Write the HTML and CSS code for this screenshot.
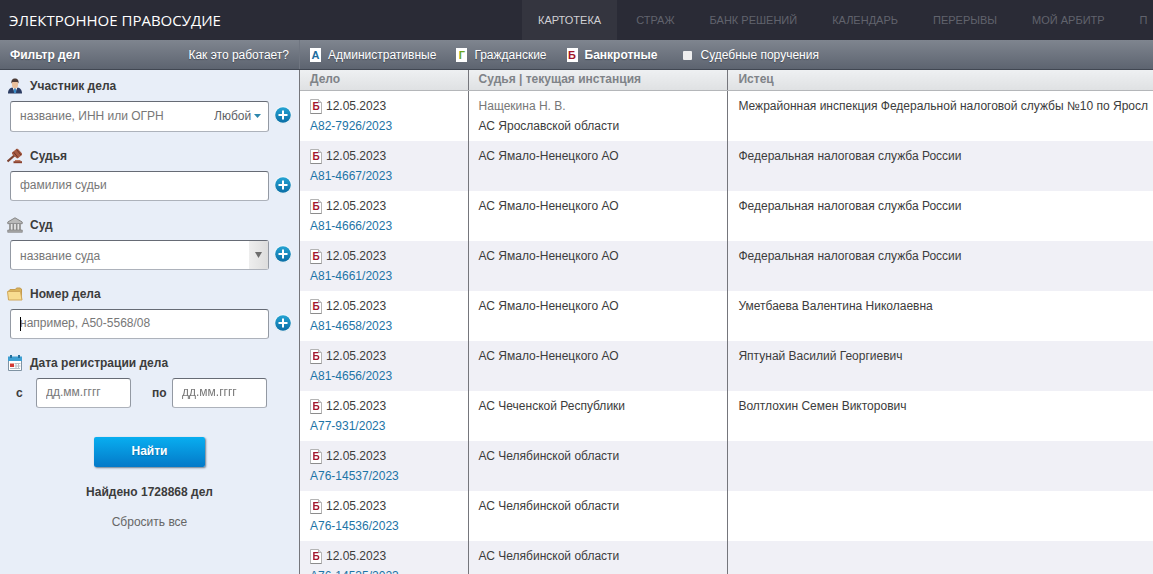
FILE: index.html
```html
<!DOCTYPE html>
<html lang="ru">
<head>
  <meta charset="UTF-8">
  <meta name="viewport" content="width=device-width, initial-scale=1.0">
  <title>Электронное правосудие</title>
  <link rel="stylesheet" href="styles.css">
</head>
<body>
  <!-- Icons used more than once -->
  <svg class="sprite" aria-hidden="true">
    <symbol id="doc" viewBox="0 0 12 16">
      <path d="M.5 1.5h8l3 3v11H.5z" fill="#fff" stroke="#b4b4b4"/>
      <path d="M8.5 1.5v3h3" fill="#ddd" stroke="#b4b4b4"/>
      <path d="M.5 15.5h11" stroke="#8c8c8c"/>
    </symbol>
    <symbol id="plus" viewBox="0 0 18 18">
      <circle cx="9" cy="9.500" r="8.500" fill="#b9cfdd"/>
      <circle cx="9" cy="9" r="8.700" fill="#f6fafd"/>
      <circle cx="9" cy="9" r="7.800" fill="url(#blue)"/>
      <path d="M9 4.500v9M4.500 9h9" stroke="#fff" stroke-width="2"/>
    </symbol>
    <linearGradient id="blue" x1="0" y1="0" x2="0" y2="1">
      <stop offset="0" stop-color="#25a3d3"/>
      <stop offset="1" stop-color="#0b6ea6"/>
    </linearGradient>
  </svg>

  <header class="header">
    <a class="logo" href="#">ЭЛЕКТРОННОЕ ПРАВОСУДИЕ</a>
    <nav class="nav">
      <a class="nav-link active" href="#">КАРТОТЕКА</a>
      <a class="nav-link" href="#">СТРАЖ</a>
      <a class="nav-link" href="#">БАНК РЕШЕНИЙ</a>
      <a class="nav-link" href="#">КАЛЕНДАРЬ</a>
      <a class="nav-link" href="#">ПЕРЕРЫВЫ</a>
      <a class="nav-link" href="#">МОЙ АРБИТР</a>
      <a class="nav-link" href="#">П</a>
    </nav>
  </header>

  <div class="toolbar">
    <div class="toolbar-left">
      <b>Фильтр дел</b>
      <a href="#">Как это работает?</a>
    </div>
    <div class="types">
      <button type="button" class="type"><span class="letter blue">А</span>Административные</button>
      <button type="button" class="type"><span class="letter green">Г</span>Гражданские</button>
      <button type="button" class="type selected"><span class="letter red">Б</span>Банкротные</button>
      <label class="orders"><input type="checkbox" class="check">Судебные поручения</label>
    </div>
  </div>

  <div class="main">
    <form class="sidebar">
      <div class="group">
        <label class="title" for="party">
          <svg class="icon" viewBox="0 0 16 16"><path d="M1 15.500c0-4 2-5.500 4.500-6h5c2.500.5 4.500 2 4.500 6z" fill="#2c3c62"/><path d="M5.500 9h5L8 15.500z" fill="#fff"/><path d="M7.300 10h1.400l.6 4L8 15.500 6.700 14z" fill="#3a8cc8"/><path d="M5 3.500h6V7c0 2-1.400 3.500-3 3.500S5 9 5 7z" fill="#eac09c"/><path d="M4.500 5.500C4 2 5.500.5 8 .5s4 1.500 3.500 5L10.500 4h-5z" fill="#4b3a36"/></svg>
          Участник дела
        </label>
        <div class="line">
          <div class="box tall">
            <input type="text" id="party" class="input" placeholder="название, ИНН или ОГРН">
            <select class="role" aria-label="Роль участника"><option>Любой</option></select>
            <svg class="caret" viewBox="0 0 7 4"><path d="M0 0h7L3.500 4z" fill="#2d87ad"/></svg>
          </div>
          <button type="button" class="add" aria-label="Добавить участника"><svg><use href="#plus"/></svg></button>
        </div>
      </div>

      <div class="group">
        <label class="title" for="judge">
          <svg class="icon" viewBox="0 0 16 16"><path d="M.5 13.500 8.500 6.500" stroke="#7d4331" stroke-width="2.200"/><path d="m5 4.500 5-4 1.500 1 3.500 4v1.500l-4.500 3.500-1-.5L5 6z" fill="#a65b43"/><path d="m6.500 4 4.500 5.500M9.500 1.500 14 7" stroke="#6e3526"/><path d="M8 12h5.500v1.500H8z" fill="#c07a5f"/><path d="M6.500 13.200h8.500v2H6.500z" fill="#8c432f"/></svg>
          Судья
        </label>
        <div class="line">
          <div class="box"><input type="text" id="judge" class="input" placeholder="фамилия судьи"></div>
          <button type="button" class="add" aria-label="Добавить судью"><svg><use href="#plus"/></svg></button>
        </div>
      </div>

      <div class="group">
        <label class="title" for="court">
          <svg class="icon" viewBox="0 0 16 16"><path d="M8 .8.8 5v1.700h14.400V5z" fill="#b9b9b9" stroke="#858585"/><path d="M2 7h12v6H2z" fill="#e4e4e4"/><path d="M3 7v6M6.300 7v6M9.700 7v6M13 7v6" stroke="#8b8b8b" stroke-width="1.600"/><path d="M.7 13h14.600v2.300H.7z" fill="#a8a8a8" stroke="#777" stroke-width=".6"/></svg>
          Суд
        </label>
        <div class="line">
          <div class="box">
            <select id="court" class="input"><option>название суда</option></select>
            <span class="drop"><svg viewBox="0 0 7 6"><path d="M0 0h7L3.500 6z" fill="#6d6d6d"/></svg></span>
          </div>
          <button type="button" class="add" aria-label="Добавить суд"><svg><use href="#plus"/></svg></button>
        </div>
      </div>

      <div class="group">
        <label class="title" for="number">
          <svg class="icon" viewBox="0 0 16 16"><path d="M2 13.500v-9l1-1h5.500l1-1.500H13l1.500 1v10z" fill="#d8b25c" stroke="#c39a4e"/><path d="M.5 5.500h13l1.500 8.500H1.500z" fill="#f8dc90" stroke="#cfa65a"/></svg>
          Номер дела
        </label>
        <div class="line">
          <div class="box editing"><input type="text" id="number" class="input" placeholder="например, А50-5568/08" autofocus></div>
          <button type="button" class="add" aria-label="Добавить номер"><svg><use href="#plus"/></svg></button>
        </div>
      </div>

      <div class="group">
        <label class="title" for="from">
          <svg class="icon" viewBox="0 0 16 16"><path d="M1.500 2.500h13v13h-13z" fill="#fff" stroke="#7f93a3"/><path d="M1 1.500h14V6H1z" fill="#3d9fd2"/><path d="M4 0v3M12 0v3" stroke="#246f9c" stroke-width="2"/><path d="M7.500 8.500h6M7.500 11h6M3 13.500h10M9 8v6M11.500 8v6" stroke="#b9c0c6"/><path d="M3 8.500h4V12H3z" fill="#d33a34"/></svg>
          Дата регистрации дела
        </label>
        <div class="dates">
          <label for="from">с</label>
          <div class="box"><input type="text" id="from" class="input" placeholder="дд.мм.гггг"></div>
          <label for="to">по</label>
          <div class="box"><input type="text" id="to" class="input" placeholder="дд.мм.гггг"></div>
        </div>
      </div>

      <div class="actions">
        <button type="submit" class="submit">Найти</button>
        <b>Найдено 1728868 дел</b>
        <button type="reset" class="reset">Сбросить все</button>
      </div>
    </form>

    <table class="cases">
      <thead>
        <tr>
          <th class="col-case">Дело</th>
          <th class="col-judge">Судья | текущая инстанция</th>
          <th>Истец</th>
        </tr>
      </thead>
      <tbody id="rows"></tbody>
    </table>
  </div>

  <script src="script.js"></script>
</body>
</html>
```
FILE: styles.css
```css
* {
  box-sizing: border-box;
}

body {
  margin: 0;
  height: 100vh;
  display: flex;
  flex-direction: column;
  overflow: hidden;
  font: 12px/20px "Liberation Sans", Arial, sans-serif;
  color: #3c3c3c;
  background: #fff;
}

a {
  color: inherit;
  text-decoration: none;
}

input,
select,
button {
  font: inherit;
  color: inherit;
  margin: 0;
  padding: 0;
  border: none;
  background: none;
  outline: none;
}

button {
  cursor: pointer;
}

.sprite {
  position: absolute;
  width: 0;
  height: 0;
}

/* Header */
.header {
  display: flex;
  flex: none;
  height: 40px;
  line-height: 40px;
  background: #2a2b36;
}

.logo {
  flex: none;
  width: 522px;
  padding-left: 9px;
  font-family: "Open Sans", sans-serif;
  font-size: 15px;
  color: #fff;
}

.nav {
  display: flex;
  gap: 3px;
  flex: 1;
  min-width: 0;
  overflow: hidden;
  font-size: 11px;
  white-space: nowrap;
}

.nav-link {
  padding: 0 16px;
  color: #61636d;
}

.nav-link.active {
  color: #d0d0d4;
  background: #34353f;
}

/* Toolbar */
.toolbar {
  display: flex;
  flex: none;
  height: 30px;
  line-height: 30px;
  color: #fff;
  text-shadow: 0 1px 1px #444a55;
  background: linear-gradient(#7f858f, #5d6470);
  border-bottom: 1px solid #414752;
}

.toolbar-left {
  display: flex;
  justify-content: space-between;
  flex: none;
  width: 300px;
  padding: 0 10px;
  border-right: 1px solid #707681;
}

.types {
  display: flex;
  gap: 20px;
  padding-left: 10px;
}

.type,
.orders {
  display: flex;
  align-items: center;
  gap: 7px;
  height: 30px;
  text-shadow: inherit;
}

.type.selected {
  font-weight: bold;
}

.letter {
  width: 11px;
  height: 14px;
  line-height: 15px;
  font-size: 11px;
  font-weight: bold;
  text-align: center;
  text-shadow: none;
  background: #fff;
}

.blue {
  color: #1e6c9e;
}

.green {
  color: #6ba51e;
}

.red {
  color: #a3162c;
}

.orders {
  gap: 8px;
  padding-left: 6px;
}

.check {
  appearance: none;
  width: 9px;
  height: 9px;
  border-radius: 1px;
  background: #eee;
}

/* Filter */
.main {
  display: flex;
  flex: 1;
  min-height: 0;
}

.sidebar {
  flex: none;
  width: 300px;
  padding: 6px 7px 0 10px;
  background: #e8eef8;
  border-right: 1px solid #75767c;
}

.group {
  margin-bottom: 14px;
}

.title {
  display: flex;
  align-items: center;
  gap: 7px;
  margin: 0 0 5px -3px;
  font-weight: bold;
}

.icon {
  width: 16px;
  height: 16px;
}

.line {
  display: flex;
  align-items: flex-start;
  gap: 5px;
}

.box {
  position: relative;
  display: flex;
  flex: 1;
  min-width: 0;
  height: 30px;
  background: #fff;
  border: 1px solid #9399a3;
  border-top-color: #666b75;
  border-bottom-color: #adb2bb;
  border-radius: 3px;
}

.box.tall {
  height: 31px;
}

.input {
  flex: 1;
  min-width: 0;
  width: 100%;
  padding: 0 9px 2px;
  appearance: none;
}

.input::placeholder,
select.input {
  color: #777;
}

select.input {
  padding: 2px 9px 0;
}

/* Text cursor of the active field */
.editing .input {
  caret-color: transparent;
}

.editing::before {
  content: "";
  position: absolute;
  left: 9px;
  top: 7px;
  width: 1px;
  height: 14px;
  background: #000;
}

.role {
  width: 54px;
  padding-bottom: 2px;
  appearance: none;
  color: #5d6166;
}

.caret {
  position: absolute;
  right: 7px;
  top: 12px;
  width: 7px;
  height: 4px;
  pointer-events: none;
}

.drop {
  display: flex;
  align-items: center;
  justify-content: center;
  flex: none;
  width: 19px;
  background: linear-gradient(90deg, #eee, #ddd);
}

.drop svg {
  width: 7px;
  height: 6px;
}

.add,
.add svg {
  display: block;
  width: 18px;
  height: 18px;
}

.add {
  margin-top: 5px;
}

.dates {
  display: flex;
  align-items: center;
  padding-right: 25px;
  font-weight: bold;
}

.dates label {
  width: 26px;
  padding-left: 6px;
}

.dates .box {
  font-weight: normal;
}

.dates .box + label {
  width: 41px;
  padding-left: 21px;
}

.actions {
  display: flex;
  flex-direction: column;
  align-items: center;
  gap: 10px;
  padding: 15px 3px 0 0;
}

.submit {
  width: 111px;
  height: 30px;
  margin-bottom: 5px;
  padding-bottom: 2px;
  font-weight: bold;
  color: #fff;
  text-shadow: 0 1px 1px #066fa9;
  background: linear-gradient(#08aef0, #0479c8);
  border-radius: 2px;
  box-shadow: 1px 1px 2px #6c7d8e;
}

.reset {
  color: #666;
}

/* Cases */
.cases {
  flex: 1;
  align-self: flex-start;
  min-width: 0;
  table-layout: fixed;
  border-collapse: collapse;
  white-space: nowrap;
}

.cases th,
.cases td {
  overflow: hidden;
  padding: 5px 5px 5px 10px;
  text-align: left;
  vertical-align: top;
}

.cases th + th,
.cases td + td {
  border-left: 1px solid #75767c;
}

.cases th {
  height: 20px;
  padding-top: 0;
  padding-bottom: 0;
  color: #7f8388;
  background: linear-gradient(#eef0f2, #dfe1e3);
  border-bottom: 1px solid #b4b6b9;
  line-height: 18px;
}

.cases tr:nth-child(even) td {
  background: #f0f0f6;
}

.col-case {
  width: 169px;
}

.col-judge {
  width: 261px;
}

.date {
  display: flex;
  align-items: center;
  gap: 4px;
}

.doc {
  position: relative;
  width: 12px;
  height: 16px;
  font-size: 10px;
  font-weight: bold;
  line-height: 18px;
  text-align: center;
}

.doc svg {
  position: absolute;
  inset: 0;
  width: 12px;
  height: 16px;
}

.doc span {
  position: relative;
}

.case-link {
  color: #1d74a6;
}

.judge {
  color: #777;
}
```
FILE: script.js
```js
const cases = [
  ["А82-7926/2023", "АС Ярославской области", "Межрайонная инспекция Федеральной налоговой службы №10 по Яросл", "Нащекина Н. В."],
  ["А81-4667/2023", "АС Ямало-Ненецкого АО", "Федеральная налоговая служба России"],
  ["А81-4666/2023", "АС Ямало-Ненецкого АО", "Федеральная налоговая служба России"],
  ["А81-4661/2023", "АС Ямало-Ненецкого АО", "Федеральная налоговая служба России"],
  ["А81-4658/2023", "АС Ямало-Ненецкого АО", "Уметбаева Валентина Николаевна"],
  ["А81-4656/2023", "АС Ямало-Ненецкого АО", "Яптунай Василий Георгиевич"],
  ["А77-931/2023", "АС Чеченской Республики", "Волтлохин Семен Викторович"],
  ["А76-14537/2023", "АС Челябинской области", ""],
  ["А76-14536/2023", "АС Челябинской области", ""],
  ["А76-14535/2023", "АС Челябинской области", ""]
];

document.getElementById("rows").innerHTML = cases.map(([number, court, plaintiff, judge]) => `
  <tr>
    <td>
      <div class="date"><span class="doc red"><svg><use href="#doc"/></svg><span>Б</span></span>12.05.2023</div>
      <a class="case-link" href="#">${number}</a>
    </td>
    <td>${judge ? `<div class="judge">${judge}</div>` : ""}${court}</td>
    <td>${plaintiff}</td>
  </tr>`).join("");
```
